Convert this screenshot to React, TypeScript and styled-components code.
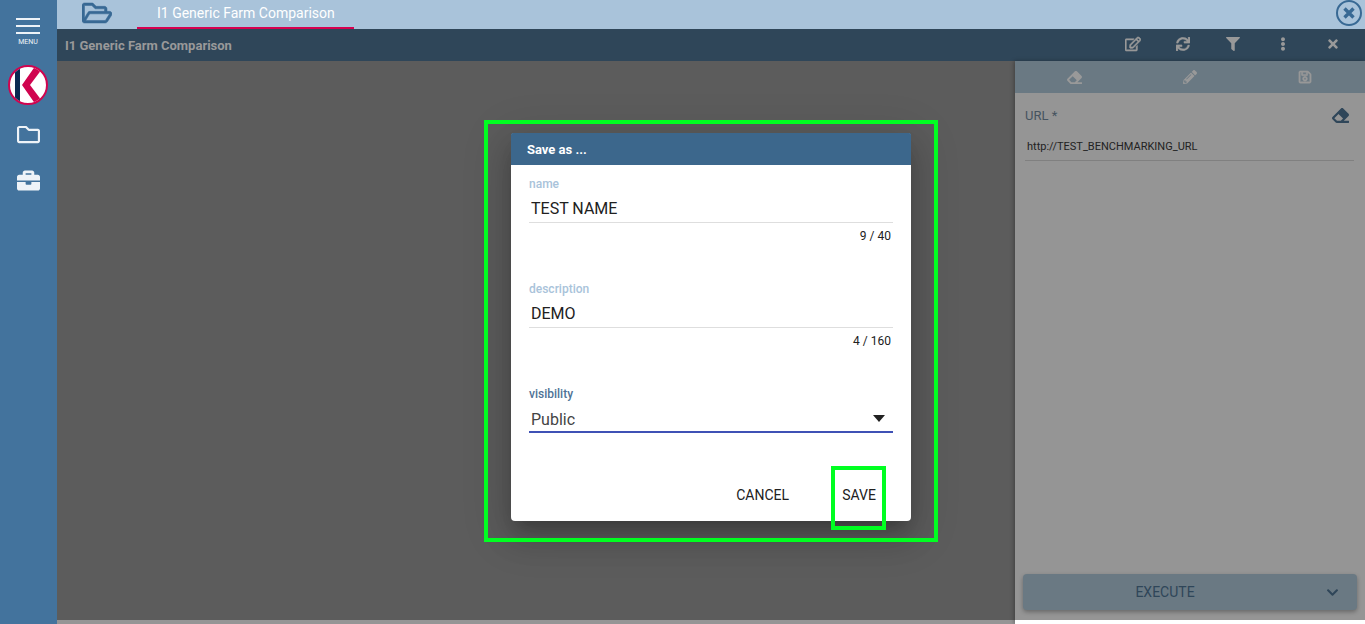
import React, { useState } from "react";
import styled, { createGlobalStyle } from "styled-components";
import {
  FaBriefcase,
  FaChevronDown,
  FaEllipsisV,
  FaEraser,
  FaFilter,
  FaPencilAlt,
  FaRegEdit,
  FaRegFolder,
  FaRegFolderOpen,
  FaRegSave,
  FaSync,
  FaTimes,
} from "react-icons/fa";

const GlobalStyle = createGlobalStyle`
  * { box-sizing: border-box; }
  body { margin: 0; font-family: Roboto, "Liberation Sans", sans-serif; }
  button, input, select { font-family: inherit; margin: 0; }
`;

const Page = styled.div`
  display: flex;
  min-height: 100vh;
`;

const Sidebar = styled.nav`
  flex: none;
  width: 57px;
  display: flex;
  flex-direction: column;
  align-items: center;
  padding-right: 1px;
  background: #43739d;
  color: #eef3f8;
`;

const PlainButton = styled.button`
  display: flex;
  align-items: center;
  justify-content: center;
  padding: 0;
  border: 0;
  background: none;
  color: inherit;
  cursor: pointer;
`;

const MenuButton = styled(PlainButton)`
  flex-direction: column;
  gap: 4px;
  width: 100%;
  padding-top: 18px;
  font-size: 7px;
  line-height: 8px;
`;

const LogoLink = styled.a`
  display: flex;
  margin-top: 19px;
`;

const SideButton = styled(PlainButton)`
  width: 100%;
  height: 46px;
  font-size: 23px;
`;

const SideList = styled.div`
  width: 100%;
  margin-top: 6px;
`;

const Main = styled.div`
  flex: 1;
  min-width: 0;
  display: flex;
  flex-direction: column;
`;

const TabBar = styled.header`
  display: flex;
  height: 29px;
  padding-left: 24px;
  background: #a9c3da;
  color: #386994;
`;

const OpenFolderButton = styled(PlainButton)`
  width: 32px;
  height: 26px;
  font-size: 30px;
  stroke-width: 10px;
`;

const Tab = styled.a`
  margin-left: 24px;
  padding: 0 19px 0 20px;
  border-bottom: 2px solid #d6004f;
  color: #fff;
  font-size: 14px;
  line-height: 27px;
  text-decoration: none;
  white-space: nowrap;
`;

const CloseAll = styled(PlainButton)`
  margin-left: auto;
  width: 32px;
  height: 26px;
`;

const Workspace = styled.div`
  position: relative;
  flex: 1;
  display: flex;
  flex-direction: column;
`;

const TitleBar = styled.div`
  display: flex;
  align-items: flex-start;
  height: 32px;
  padding: 0 7px 0 8px;
  background: #2f4659;
  color: #999;
`;

const Title = styled.h1`
  flex: 1;
  margin: 0;
  font-size: 13px;
  font-weight: 700;
  line-height: 33px;
`;

const TitleAction = styled(PlainButton)`
  width: 50px;
  height: 30px;
  font-size: 14px;
`;

const Content = styled.div`
  flex: 1;
  display: flex;
`;

const Canvas = styled.main`
  flex: 1;
  display: flex;
  background: #5c5c5c;
  border-bottom: 4px solid #959595;
`;

const Panel = styled.aside`
  flex: none;
  width: 350px;
  display: flex;
  flex-direction: column;
  background: #959595;
  border-bottom: 4px solid #fff;
  box-shadow: -1px 0 4px rgba(0, 0, 0, 0.3);
`;

const PanelTools = styled.div`
  display: flex;
  height: 32px;
  padding: 0 2px;
  background: #6a7983;
  color: #999;
`;

const PanelTool = styled(PlainButton)`
  flex: 1;
  font-size: 14px;
`;

const ParamRow = styled.div`
  display: flex;
  align-items: center;
  justify-content: space-between;
  height: 32px;
  margin: 6px 16px 0 10px;
  color: #2f4659;
`;

const ParamLabel = styled.label`
  color: #45535f;
  font-size: 13px;
`;

const ParamInput = styled.input`
  height: 30px;
  margin: 0 11px 0 10px;
  padding: 2px 2px 0;
  border: 0;
  border-bottom: 1px solid #808080;
  background: none;
  color: #222;
  font-size: 11px;
  outline: 0;
`;

const ExecuteBar = styled.div`
  display: flex;
  height: 36px;
  margin: auto 8px 10px;
  border-radius: 4px;
  background: #6a7983;
  box-shadow: 0 2px 4px rgba(0, 0, 0, 0.3);
  color: #2f4659;
`;

const ExecuteButton = styled(PlainButton)`
  flex: 1;
  font-size: 14px;
`;

const ExecuteMenu = styled(PlainButton)`
  width: 50px;
  font-size: 13px;
`;

const Overlay = styled.div`
  position: absolute;
  inset: 0;
  display: flex;
  align-items: center;
  justify-content: center;
`;

const Dialog = styled.form`
  position: relative;
  width: 400px;
  border-radius: 4px;
  background: #fff;
  box-shadow: 0 11px 15px -7px rgba(0, 0, 0, 0.2), 0 9px 46px 8px rgba(0, 0, 0, 0.12),
    0 16px 30px 2px rgba(0, 0, 0, 0.14);
`;

const DialogMarker = styled.span`
  position: absolute;
  inset: -13px -27px -21px;
  border: 4px solid #00ff21;
  pointer-events: none;
`;

const DialogTitle = styled.h2`
  height: 32px;
  margin: 0;
  padding: 0 16px;
  border-radius: 2px 2px 0 0;
  background: #3c678c;
  color: #fff;
  font-size: 13px;
  font-weight: 700;
  line-height: 33px;
`;

const Fields = styled.div`
  display: flex;
  flex-direction: column;
  gap: 37px;
  padding: 11px 18px 44px;
`;

const Field = styled.div`
  display: flex;
  flex-direction: column;
`;

const FieldLabel = styled.label<{ $active?: boolean }>`
  color: ${(p) => (p.$active ? "#4f7396" : "#a9c3da")};
  font-size: 12px;
  font-weight: 500;
  line-height: 16px;
`;

const TextInput = styled.input`
  height: 31px;
  padding: 4px 2px 0;
  border: 0;
  border-bottom: 1px solid #dedede;
  background: none;
  color: #212121;
  font-size: 16px;
  outline: 0;
`;

const Counter = styled.span`
  margin-top: 5px;
  padding-right: 2px;
  color: #212121;
  font-size: 12px;
  line-height: 16px;
  text-align: right;
`;

const SelectBox = styled.div`
  position: relative;
  display: flex;
`;

const Select = styled.select`
  flex: 1;
  height: 31px;
  padding: 6px 2px 0;
  border: 0;
  border-bottom: 2px solid #3f51b5;
  border-radius: 0;
  appearance: none;
  background: none;
  color: #444;
  font-size: 16px;
  outline: 0;
`;

const Arrow = styled.svg`
  position: absolute;
  top: 13px;
  right: 8px;
  pointer-events: none;
`;

const Actions = styled.div`
  display: flex;
  justify-content: flex-end;
  gap: 20px;
  padding: 0 18px 8px;
`;

const ActionButton = styled(PlainButton)`
  position: relative;
  min-width: 68px;
  height: 36px;
  padding: 0 16px;
  color: #212121;
  font-size: 14px;
`;

const SaveMarker = styled.span`
  position: absolute;
  inset: -11px 7px -17px 6px;
  border: 4px solid #00ff21;
  pointer-events: none;
`;

function Logo() {
  return (
    <svg width="40" height="40" viewBox="0 0 40 40" aria-hidden="true">
      <defs>
        <clipPath id="disc">
          <circle cx="20" cy="20" r="18" />
        </clipPath>
      </defs>
      <circle cx="20" cy="20" r="19" fill="#fff" stroke="#d0044f" strokeWidth="2" />
      <g clipPath="url(#disc)">
        <path d="M7 0h5v40H7z" fill="#0b2a52" />
        <path d="M28 0h9L22 20l15 20h-9L14 20z" fill="#d0044f" />
      </g>
    </svg>
  );
}

export default function App() {
  const [name, setName] = useState("TEST NAME");
  const [description, setDescription] = useState("DEMO");

  return (
    <Page>
      <GlobalStyle />
      <Sidebar>
        <MenuButton type="button">
          <svg width="24" height="16" viewBox="0 0 24 16" fill="currentColor" aria-hidden="true">
            <path d="M0 0h24v2H0zM0 7h24v2H0zM0 14h24v2H0z" />
          </svg>
          MENU
        </MenuButton>
        <LogoLink href="#home" aria-label="Home">
          <Logo />
        </LogoLink>
        <SideList>
          <SideButton type="button" aria-label="Documents">
            <FaRegFolder />
          </SideButton>
          <SideButton type="button" aria-label="Tools">
            <FaBriefcase />
          </SideButton>
        </SideList>
      </Sidebar>
      <Main>
        <TabBar>
          <OpenFolderButton type="button" aria-label="Open folder">
            <FaRegFolderOpen strokeWidth={10} />
          </OpenFolderButton>
          <Tab href="#comparison">I1 Generic Farm Comparison</Tab>
          <CloseAll type="button" aria-label="Close all">
            <svg width="26" height="26" viewBox="0 0 26 26" fill="none" stroke="currentColor" aria-hidden="true">
              <circle cx="13" cy="13" r="12" strokeWidth="2" />
              <path d="M8.5 8.5l9 9m0-9l-9 9" strokeWidth="3.4" />
            </svg>
          </CloseAll>
        </TabBar>
        <Workspace>
          <TitleBar>
            <Title>I1 Generic Farm Comparison</Title>
            <TitleAction type="button" aria-label="Edit"><FaRegEdit size={16} strokeWidth={18} /></TitleAction>
            <TitleAction type="button" aria-label="Refresh"><FaSync strokeWidth={10} /></TitleAction>
            <TitleAction type="button" aria-label="Filter"><FaFilter /></TitleAction>
            <TitleAction type="button" aria-label="More"><FaEllipsisV /></TitleAction>
            <TitleAction type="button" aria-label="Close"><FaTimes /></TitleAction>
          </TitleBar>
          <Content>
            <Canvas />
            <Panel>
              <PanelTools>
                <PanelTool type="button" aria-label="Clear all"><FaEraser size={15} /></PanelTool>
                <PanelTool type="button" aria-label="Edit parameters"><FaPencilAlt /></PanelTool>
                <PanelTool type="button" aria-label="Save parameters"><FaRegSave strokeWidth={18} /></PanelTool>
              </PanelTools>
              <ParamRow>
                <ParamLabel htmlFor="url">URL *</ParamLabel>
                <PlainButton type="button" aria-label="Clear URL"><FaEraser size={17} /></PlainButton>
              </ParamRow>
              <ParamInput id="url" defaultValue="http://TEST_BENCHMARKING_URL" />
              <ExecuteBar>
                <ExecuteButton type="button">EXECUTE</ExecuteButton>
                <ExecuteMenu type="button" aria-label="Execute options"><FaChevronDown /></ExecuteMenu>
              </ExecuteBar>
            </Panel>
          </Content>
          <Overlay>
            <Dialog role="dialog" aria-labelledby="dialog-title" onSubmit={(e) => e.preventDefault()}>
              <DialogTitle id="dialog-title">Save as ...</DialogTitle>
              <Fields>
                <Field>
                  <FieldLabel htmlFor="name">name</FieldLabel>
                  <TextInput id="name" maxLength={40} value={name} onChange={(e) => setName(e.target.value)} />
                  <Counter>{name.length} / 40</Counter>
                </Field>
                <Field>
                  <FieldLabel htmlFor="description">description</FieldLabel>
                  <TextInput
                    id="description"
                    maxLength={160}
                    value={description}
                    onChange={(e) => setDescription(e.target.value)}
                  />
                  <Counter>{description.length} / 160</Counter>
                </Field>
                <Field>
                  <FieldLabel htmlFor="visibility" $active>visibility</FieldLabel>
                  <SelectBox>
                    <Select id="visibility" defaultValue="Public">
                      <option>Public</option>
                      <option>Private</option>
                    </Select>
                    <Arrow width="12" height="7" viewBox="0 0 12 7" aria-hidden="true">
                      <path d="M0 0h12L6 7z" fill="#212121" />
                    </Arrow>
                  </SelectBox>
                </Field>
              </Fields>
              <Actions>
                <ActionButton type="button">CANCEL</ActionButton>
                <ActionButton type="submit">
                  SAVE
                  <SaveMarker />
                </ActionButton>
              </Actions>
              <DialogMarker />
            </Dialog>
          </Overlay>
        </Workspace>
      </Main>
    </Page>
  );
}
